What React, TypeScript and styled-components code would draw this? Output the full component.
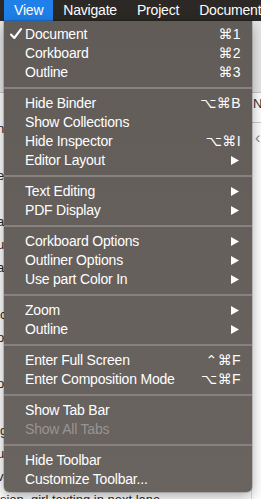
import styled, { createGlobalStyle } from "styled-components";

const GlobalStyle = createGlobalStyle`
  html, body {
    margin: 0;
    padding: 0;
    background: #ffffff;
  }
  body {
    font-family: "Liberation Sans", Arial, sans-serif;
  }
`;

const Page = styled.div`
  position: relative;
  width: 261px;
  height: 499px;
  overflow: hidden;
  display: flex;
  flex-direction: column;
  background: #ffffff;
`;

const MenuBar = styled.div`
  height: 21px;
  flex: none;
  display: flex;
  padding-left: 4px;
  background: #2b2825;
`;

const MenuTitle = styled.div<{ $active?: boolean }>`
  padding: 0 10px;
  line-height: 21px;
  font-size: 14px;
  letter-spacing: -0.2px;
  color: #ffffff;
  white-space: nowrap;
  background: ${(p) => (p.$active ? "#1f80ea" : "transparent")};
`;

const Backdrop = styled.div`
  flex: 1;
  display: flex;
  flex-direction: column;
  min-height: 0;
`;

const Toolbar = styled.div`
  height: 71px;
  flex: none;
  background: #e7e7e7;
  border-bottom: 1px solid #c8c8c8;
`;

const Body = styled.div`
  flex: 1;
  display: flex;
  min-height: 0;
`;

const Editor = styled.div`
  flex: 1;
  margin-left: -3px;
  padding-top: 1px;
  font-size: 13px;
  line-height: 23.2px;
  color: #2a2a2a;
  white-space: nowrap;
  overflow: hidden;
`;

const Mark = styled.span`
  color: #e08a1e;
`;

const Inspector = styled.div`
  width: 9px;
  flex: none;
  border-left: 1px solid #d6d6d6;
  display: flex;
  flex-direction: column;
  overflow: hidden;
`;

const InspectorHeader = styled.div`
  height: 29px;
  border-bottom: 1px solid #cfcfcf;
  font-size: 13px;
  line-height: 22px;
  color: #333;
  white-space: nowrap;
  padding-left: 1px;
`;

const Chevron = styled.div`
  padding: 5px 0 0 3px;
  color: #8c8c8c;
  font-size: 16px;
  line-height: 20px;
`;

const Menu = styled.div`
  position: absolute;
  top: 21px;
  left: 4px;
  width: 248px;
  padding: 4px 0 3px;
  background: linear-gradient(180deg, #625c59 0%, #67615e 60%, #6a6461 100%);
  border-radius: 0 0 5px 5px;
  box-shadow: 0 4px 14px rgba(0, 0, 0, 0.35), 0 0 0 0.5px rgba(0, 0, 0, 0.3);
`;

const Item = styled.div<{ $disabled?: boolean }>`
  height: 19px;
  display: grid;
  grid-template-columns: 15px 1fr auto;
  align-items: center;
  padding: 0 11px 0 6px;
  font-size: 14px;
  letter-spacing: -0.2px;
  color: ${(p) => (p.$disabled ? "rgba(255, 255, 255, 0.33)" : "#ffffff")};
`;

const Label = styled.span`
  line-height: 19px;
  white-space: nowrap;
`;

const Shortcut = styled.span`
  font-family: "Liberation Sans", "DejaVu Sans", sans-serif;
  font-size: 14px;
  letter-spacing: 0.4px;
  line-height: 19px;
`;

const Arrow = styled.svg`
  width: 8px;
  height: 9px;
  margin-right: 2px;
  display: block;
`;

const Separator = styled.div`
  height: 2px;
  margin: 5px 0;
  background: #878180;
`;

type Entry =
  | { label: string; key?: string; sub?: boolean; checked?: boolean; disabled?: boolean }
  | "sep";

const entries: Entry[] = [
  { label: "Document", key: "⌘1", checked: true },
  { label: "Corkboard", key: "⌘2" },
  { label: "Outline", key: "⌘3" },
  "sep",
  { label: "Hide Binder", key: "⌥⌘B" },
  { label: "Show Collections" },
  { label: "Hide Inspector", key: "⌥⌘I" },
  { label: "Editor Layout", sub: true },
  "sep",
  { label: "Text Editing", sub: true },
  { label: "PDF Display", sub: true },
  "sep",
  { label: "Corkboard Options", sub: true },
  { label: "Outliner Options", sub: true },
  { label: "Use part Color In", sub: true },
  "sep",
  { label: "Zoom", sub: true },
  { label: "Outline", sub: true },
  "sep",
  { label: "Enter Full Screen", key: "⌃⌘F" },
  { label: "Enter Composition Mode", key: "⌥⌘F" },
  "sep",
  { label: "Show Tab Bar" },
  { label: "Show All Tabs", disabled: true },
  "sep",
  { label: "Hide Toolbar" },
  { label: "Customize Toolbar..." },
];

const editorLines = [
  "",
  "ncluded in the scene.",
  "",
  "ecause she never stopped.",
  "",
  "ar horns somewhere behind",
  "uite a while before it",
  "ain against the glass.",
  "",
  "icking over on the dash",
  "ould not tell anyone",
  "",
  "ow the light turned green",
  "",
  "ight after the call.",
  "ut she kept driving",
  "ven when the road ended",
  "ision, girl texting in next lane",
];

function Check() {
  return (
    <svg width="12" height="12" viewBox="0 0 12 12">
      <path d="M1 6.6 L4.3 10 L11 1.2" fill="none" stroke="#fff" strokeWidth="2.1" strokeLinecap="round" strokeLinejoin="round" />
    </svg>
  );
}

export default function App() {
  return (
    <>
      <GlobalStyle />
      <Page>
        <MenuBar>
          <MenuTitle $active>View</MenuTitle>
          <MenuTitle>Navigate</MenuTitle>
          <MenuTitle>Project</MenuTitle>
          <MenuTitle>Documents</MenuTitle>
        </MenuBar>
        <Backdrop>
          <Toolbar />
          <Body>
            <Editor>
              {editorLines.map((line, i) => (
                <div key={i}>
                  {i === 13 ? <Mark>I</Mark> : null}
                  {line || "\u00a0"}
                </div>
              ))}
            </Editor>
            <Inspector>
              <InspectorHeader>Notes</InspectorHeader>
              <Chevron>‹</Chevron>
            </Inspector>
          </Body>
        </Backdrop>
        <Menu>
          {entries.map((e, i) =>
            e === "sep" ? (
              <Separator key={i} />
            ) : (
              <Item key={i} $disabled={e.disabled}>
                <span>{e.checked ? <Check /> : null}</span>
                <Label>{e.label}</Label>
                {e.key ? <Shortcut>{e.key}</Shortcut> : null}
                {e.sub ? (
                  <Arrow viewBox="0 0 8 9">
                    <polygon points="0,0 8,4.5 0,9" fill="#fff" />
                  </Arrow>
                ) : null}
                {!e.key && !e.sub ? <span /> : null}
              </Item>
            )
          )}
        </Menu>
      </Page>
    </>
  );
}
